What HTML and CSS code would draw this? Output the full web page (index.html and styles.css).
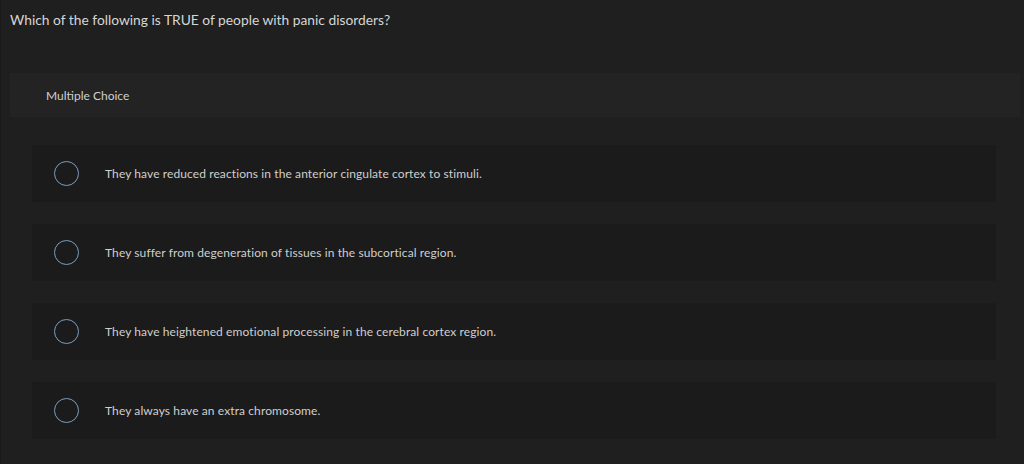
FILE: index.html
```html
<!DOCTYPE html>
<html>
<head>
<meta charset="utf-8">
<link rel="stylesheet" href="styles.css">
</head>
<body>
<div class="page">
  <p class="question">Which of the following is TRUE of people with panic disorders?</p>
  <div class="type-panel">Multiple Choice</div>
  <ul class="options">
    <li class="option"><span class="radio"></span><span class="label">They have reduced reactions in the anterior cingulate cortex to stimuli.</span></li>
    <li class="option"><span class="radio"></span><span class="label">They suffer from degeneration of tissues in the subcortical region.</span></li>
    <li class="option"><span class="radio"></span><span class="label">They have heightened emotional processing in the cerebral cortex region.</span></li>
    <li class="option"><span class="radio"></span><span class="label">They always have an extra chromosome.</span></li>
  </ul>
</div>
</body>
</html>
```
FILE: styles.css
```css
html, body {
  margin: 0;
  padding: 0;
  background: #1f1f1f;
  height: 100%;
}
body {
  font-family: Lato, "Open Sans", Arial, sans-serif;
  color: #d2d2d2;
}
.page {
  border-left: 1px solid #1a1a1a;
  height: 464px;
  box-sizing: border-box;
  padding: 11px 4px 0 9px;
  display: flex;
  flex-direction: column;
}
.question {
  margin: 0;
  font-size: 13.8px;
  line-height: 17px;
  color: #d6d6d6;
}
.type-panel {
  margin-top: 45px;
  height: 44px;
  background: #232323;
  display: flex;
  align-items: center;
  padding-left: 36px;
  font-size: 12px;
  color: #d0d0d0;
}
.options {
  list-style: none;
  margin: 28px 24px 0 22px;
  padding: 0;
  display: flex;
  flex-direction: column;
  gap: 22px;
}
.option {
  height: 57px;
  background: #1b1b1b;
  border-radius: 2px;
  display: flex;
  align-items: center;
  padding-left: 22px;
  gap: 26px;
}
.radio {
  width: 23px;
  height: 23px;
  border: 1px solid #7b9dc2;
  border-radius: 50%;
  flex: none;
}
.label {
  font-size: 12px;
  letter-spacing: 0.1px;
  color: #cfcfcf;
}
```
